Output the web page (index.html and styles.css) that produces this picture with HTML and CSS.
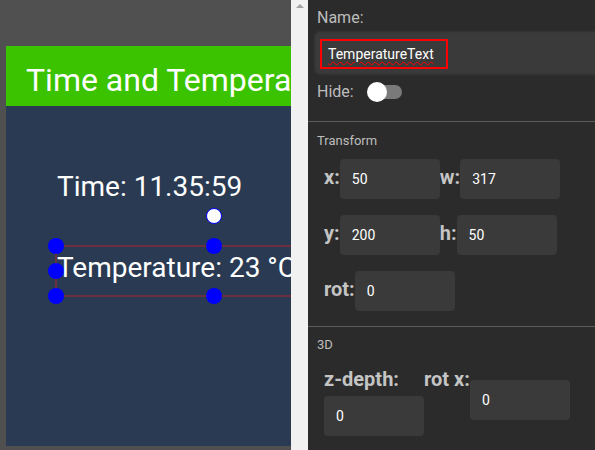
FILE: index.html
```html
<!DOCTYPE html>
<html>
<head>
<meta charset="utf-8">
<link rel="stylesheet" href="styles.css">
</head>
<body>
<div class="app">
  <div class="stage">
    <div class="screen">
      <div class="screen-header">Time and Temperature</div>
      <div class="screen-body">
        <div class="node node-time">Time: 11.35:59</div>
        <div class="sel-box"></div>
        <span class="handle h-tl"></span>
        <span class="handle h-ml"></span>
        <span class="handle h-bl"></span>
        <span class="handle h-tc"></span>
        <span class="handle h-bc"></span>
        <span class="handle h-rot"></span>
        <div class="node node-temp">Temperature: 23 °C</div>
      </div>
    </div>
  </div>
  <div class="scrollbar"><span class="scroll-arrow"></span></div>
  <div class="panel">
    <section class="sec sec-name">
      <div class="lbl">Name:</div>
      <div class="name-input"><span class="name-val">TemperatureText</span></div>
      <div class="hide-row">
        <span class="lbl">Hide:</span>
        <span class="toggle"><span class="track"></span><span class="knob"></span></span>
      </div>
    </section>
    <section class="sec sec-transform">
      <div class="sec-title">Transform</div>
      <div class="fields">
        <div class="row">
          <span class="flbl">x:</span><div class="fin">50</div>
          <span class="flbl">w:</span><div class="fin">317</div>
        </div>
        <div class="row">
          <span class="flbl">y:</span><div class="fin">200</div>
          <span class="flbl">h:</span><div class="fin">50</div>
        </div>
        <div class="row">
          <span class="flbl">rot:</span><div class="fin">0</div>
        </div>
      </div>
    </section>
    <section class="sec sec-3d">
      <div class="sec-title">3D</div>
      <div class="row3d">
        <div class="col-z">
          <div class="flbl lbl-block">z-depth:</div>
          <div class="fin fin-z">0</div>
        </div>
        <div class="col-rx">
          <span class="flbl lbl-block">rot x:</span>
          <div class="fin fin-rx">0</div>
        </div>
      </div>
    </section>
  </div>
</div>
</body>
</html>
```

FILE: styles.css
```css
html, body {
  margin: 0;
  padding: 0;
}
body {
  width: 595px;
  height: 450px;
  overflow: hidden;
  font-family: Roboto, "Liberation Sans", sans-serif;
}
.app {
  display: flex;
  width: 595px;
  height: 450px;
}
.stage {
  width: 291px;
  flex: none;
  background: #505050;
  padding: 46px 0 0 6px;
  box-sizing: border-box;
  overflow: hidden;
}
.screen {
  width: 420px;
  height: 400px;
  background: #293a52;
}
.screen-header {
  height: 60px;
  box-sizing: border-box;
  background: #3bc300;
  color: #ffffff;
  font-size: 32px;
  padding: 15px 0 0 20px;
  white-space: nowrap;
}
.screen-body {
  position: relative;
  height: 340px;
}
.node {
  position: absolute;
  left: 51px;
  color: #ffffff;
  font-size: 28px;
  white-space: nowrap;
  z-index: 2;
}
.node-time {
  top: 64px;
}
.node-temp {
  top: 145px;
}
.sel-box {
  position: absolute;
  left: 49px;
  top: 139px;
  width: 319px;
  height: 52px;
  box-sizing: border-box;
  border: 2px solid #6b2f3e;
}
.handle {
  position: absolute;
  width: 16px;
  height: 16px;
  margin: -8px 0 0 -8px;
  border-radius: 50%;
  background: #0000ff;
  box-sizing: border-box;
  z-index: 1;
}
.h-tl { left: 50px; top: 140px; }
.h-ml { left: 50px; top: 165px; }
.h-bl { left: 50px; top: 190px; }
.h-tc { left: 208px; top: 140px; }
.h-bc { left: 208px; top: 190px; }
.h-rot { left: 208px; top: 110px; background: #ffffff; border: 1px solid #0000ff; }

.scrollbar {
  width: 17px;
  flex: none;
  background: #f1f1f1;
  display: flex;
  justify-content: center;
  padding-top: 4px;
  box-sizing: border-box;
}
.scroll-arrow {
  width: 0;
  height: 0;
  border-left: 4px solid transparent;
  border-right: 4px solid transparent;
  border-bottom: 4px solid #a3a3a3;
}
.panel {
  flex: 1;
  background: #2b2b2b;
  overflow: hidden;
}
.sec {
  border-top: 1px solid #5c5c5c;
}
.sec-name {
  border-top: none;
  padding: 8px 0 17px 9px;
}
.lbl {
  font-size: 16px;
  line-height: 20px;
  color: #bdbdbd;
}
.name-input {
  margin-top: 5px;
  margin-left: -1px;
  width: 320px;
  height: 40px;
  box-sizing: border-box;
  background: #3a3a3a;
  border-radius: 4px;
  box-shadow: 0 0 3px 1px rgba(255, 255, 255, 0.1);
  padding: 6px 0 0 4px;
}
.name-val {
  display: inline-block;
  border: 2px solid #ff0000;
  height: 30px;
  box-sizing: border-box;
  padding: 0 12px 0 6px;
  color: #ffffff;
  font-size: 14px;
  line-height: 26px;
  text-decoration: underline wavy #ff0000;
  text-decoration-thickness: 1px;
  text-underline-offset: 2px;
}
.hide-row {
  margin-top: 7px;
  height: 24px;
  display: flex;
  align-items: center;
}
.hide-row .lbl {
  line-height: 24px;
}
.toggle {
  position: relative;
  width: 36px;
  height: 20px;
  margin-left: 13px;
}
.track {
  position: absolute;
  left: 1px;
  top: 3px;
  width: 34px;
  height: 14px;
  border-radius: 7px;
  background: #7a7a7a;
}
.knob {
  position: absolute;
  left: 0;
  top: 0;
  width: 20px;
  height: 20px;
  border-radius: 50%;
  background: #ffffff;
}
.sec-title {
  font-size: 13px;
  line-height: 16px;
  color: #bdbdbd;
}
.sec-transform {
  padding: 11px 0 15px 9px;
}
.fields {
  margin-top: 10px;
  padding-left: 7px;
  display: flex;
  flex-direction: column;
  gap: 16px;
}
.row {
  display: flex;
  align-items: baseline;
}
.flbl {
  font-size: 20px;
  font-weight: 700;
  color: #c4c4c4;
  line-height: 24px;
}
.fin {
  width: 100px;
  height: 40px;
  box-sizing: border-box;
  background: #3a3a3a;
  border-radius: 4px;
  color: #ffffff;
  font-size: 14px;
  line-height: 40px;
  padding-left: 12px;
}
.sec-3d {
  padding: 10px 0 0 9px;
}
.row3d {
  margin-top: 14px;
  padding-left: 7px;
  display: flex;
  align-items: flex-start;
}
.col-z {
  width: 100px;
}
.lbl-block {
  display: block;
}
.fin-z {
  margin-top: 5px;
}
.col-rx {
  display: flex;
  align-items: flex-start;
}
.fin-rx {
  margin-top: 13px;
}
```
